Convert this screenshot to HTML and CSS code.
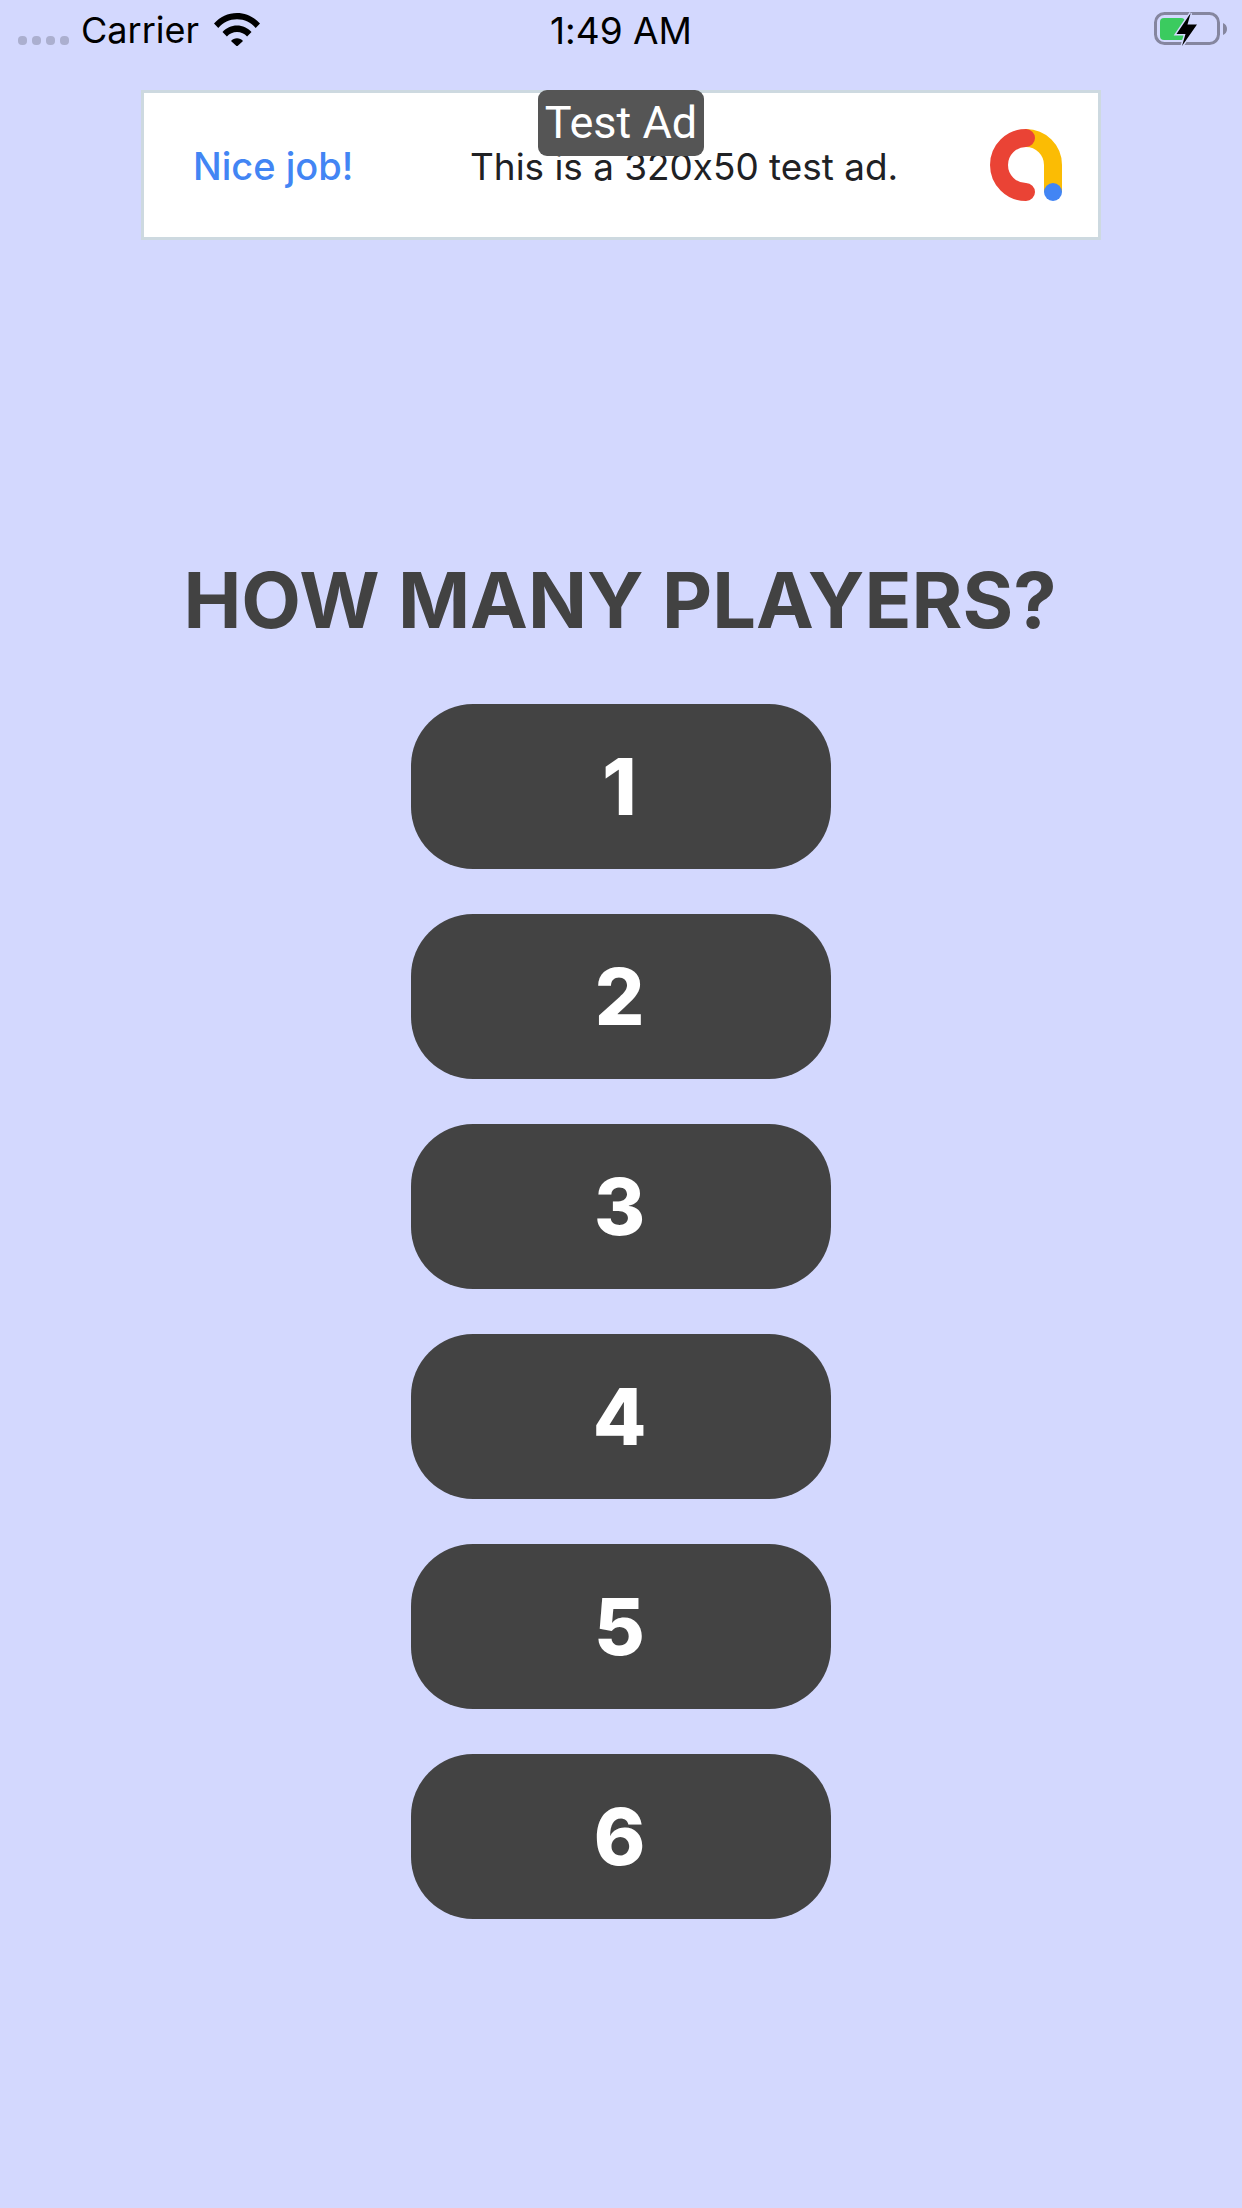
FILE: index.html
```html
<!DOCTYPE html>
<html lang="en">
<head>
    <meta charset="UTF-8">
    <meta name="viewport" content="width=device-width, initial-scale=1.0">
    <title>How many players</title>
    <link rel="stylesheet" href="styles.css">
</head>
<body>
    <!-- Status bar -->
    <div class="status-bar">
        <div class="status-left">
            <div class="signal">
                <span class="dot"></span><span class="dot"></span><span class="dot"></span><span class="dot"></span>
            </div>
            <span class="carrier">Carrier</span>
            <svg class="wifi" width="46" height="34" viewBox="0 0 46 34">
                <path d="M0 11.5C6 5 14 1 23 1s17 4 23 10.5l-4.300 4.500C37 10.500 30.500 7.300 23 7.300S9 10.500 4.300 16z"/>
                <path d="M8.500 20C12.200 16 17.300 13.500 23 13.500S33.800 16 37.500 20l-4.400 4.500C30.500 21.700 27 20 23 20s-7.500 1.700-10.100 4.500z"/>
                <path d="M17 29c1.500-1.700 3.600-2.700 6-2.700s4.500 1 6 2.700l-6 5.500z"/>
            </svg>
        </div>
        <span class="clock">1:49 AM</span>
        <div class="status-right">
            <svg width="76" height="36" viewBox="0 0 76 36">
                <rect x="1.500" y="1.500" width="63" height="30" rx="9" fill="none" stroke="#85869f" stroke-width="3"/>
                <rect x="6" y="6" width="25" height="22" rx="4" fill="#3bcb5f"/>
                <path d="M69 11c2.500 1 4 3 4 6s-1.500 5-4 6z" fill="#85869f"/>
                <path class="bolt" d="M36.700 1L22.500 22H31.500L28 34L43 12.500H33.500z"/>
            </svg>
        </div>
    </div>

    <!-- Banner ad -->
    <div class="ad-banner">
        <span class="ad-label">Test Ad</span>
        <span class="ad-title">Nice job!</span>
        <span class="ad-text">This is a 320x50 test ad.</span>
        <svg class="ad-logo" width="72" height="72" viewBox="0 0 72 72">
            <path d="M36 9A27 27 0 0 1 63 36V63" fill="none" stroke="#fbbc04" stroke-width="18"/>
            <path d="M36 9A27 27 0 0 0 36 63" fill="none" stroke="#ea4335" stroke-width="18" stroke-linecap="round"/>
            <circle cx="63" cy="63" r="9" fill="#4285f4"/>
        </svg>
    </div>

    <h1 class="question">HOW MANY PLAYERS?</h1>

    <div class="player-list">
        <button class="player-btn">1</button>
        <button class="player-btn">2</button>
        <button class="player-btn">3</button>
        <button class="player-btn">4</button>
        <button class="player-btn">5</button>
        <button class="player-btn">6</button>
    </div>
</body>
</html>
```

FILE: styles.css
```css
html, body {
    height: 100%;
}

body {
    margin: 0;
    background-color: #d3d8fe;
    font-family: Inter, "Liberation Sans", sans-serif;
    font-feature-settings: "calt" 0;
    overflow: hidden;
}

.status-bar {
    height: 60px;
    padding: 0 12px 0 18px;
    display: grid;
    grid-template-columns: 1fr auto 1fr;
    align-items: center;
    color: #000;
    font-size: 36px;
}

.status-left {
    display: flex;
    align-items: center;
}

.signal {
    display: flex;
    gap: 5px;
    margin-top: 20px;
}

.dot {
    width: 9px;
    height: 9px;
    border-radius: 4px;
    background-color: #abafcf;
}

.carrier {
    margin-left: 12px;
}

.wifi {
    margin-left: 15px;
    margin-top: -2px;
}

.clock {
    padding-right: 6px;
    font-size: 37px;
}

.status-right {
    display: flex;
    justify-content: flex-end;
}

.bolt {
    fill: #000;
    stroke: #d3d8fe;
    stroke-width: 3px;
    paint-order: stroke;
}

.ad-banner {
    position: relative;
    box-sizing: border-box;
    width: 960px;
    height: 150px;
    margin: 30px auto 0;
    padding: 0 36px 0 49px;
    display: flex;
    align-items: center;
    background-color: #fff;
    border: 3px solid #cdd9e0;
}

.ad-label {
    position: absolute;
    top: -3px;
    left: 394px;
    width: 166px;
    height: 66px;
    line-height: 66px;
    text-align: center;
    border-radius: 9px;
    background-color: #555;
    color: #fff;
    font-size: 45px;
    font-family: Roboto, sans-serif;
}

.ad-title {
    width: 277px;
    padding-top: 2px;
    color: #4285f4;
    font-size: 38px;
    font-weight: 500;
}

.ad-text {
    flex: 1;
    padding-top: 2px;
    color: #202124;
    font-size: 36.900px;
}

.question {
    margin: 316px 2px 0 0;
    text-align: center;
    color: #424242;
    font-size: 77.500px;
    line-height: 88px;
    font-weight: 700;
}

.player-list {
    margin-top: 60px;
    display: flex;
    flex-direction: column;
    align-items: center;
    gap: 45px;
}

.player-btn {
    width: 420px;
    height: 165px;
    padding: 0 3px 0 0;
    border: none;
    border-radius: 62px;
    background-color: #434343;
    color: #fff;
    font-family: Inter, "Liberation Sans", sans-serif;
    font-size: 78px;
    font-weight: 800;
}
```
